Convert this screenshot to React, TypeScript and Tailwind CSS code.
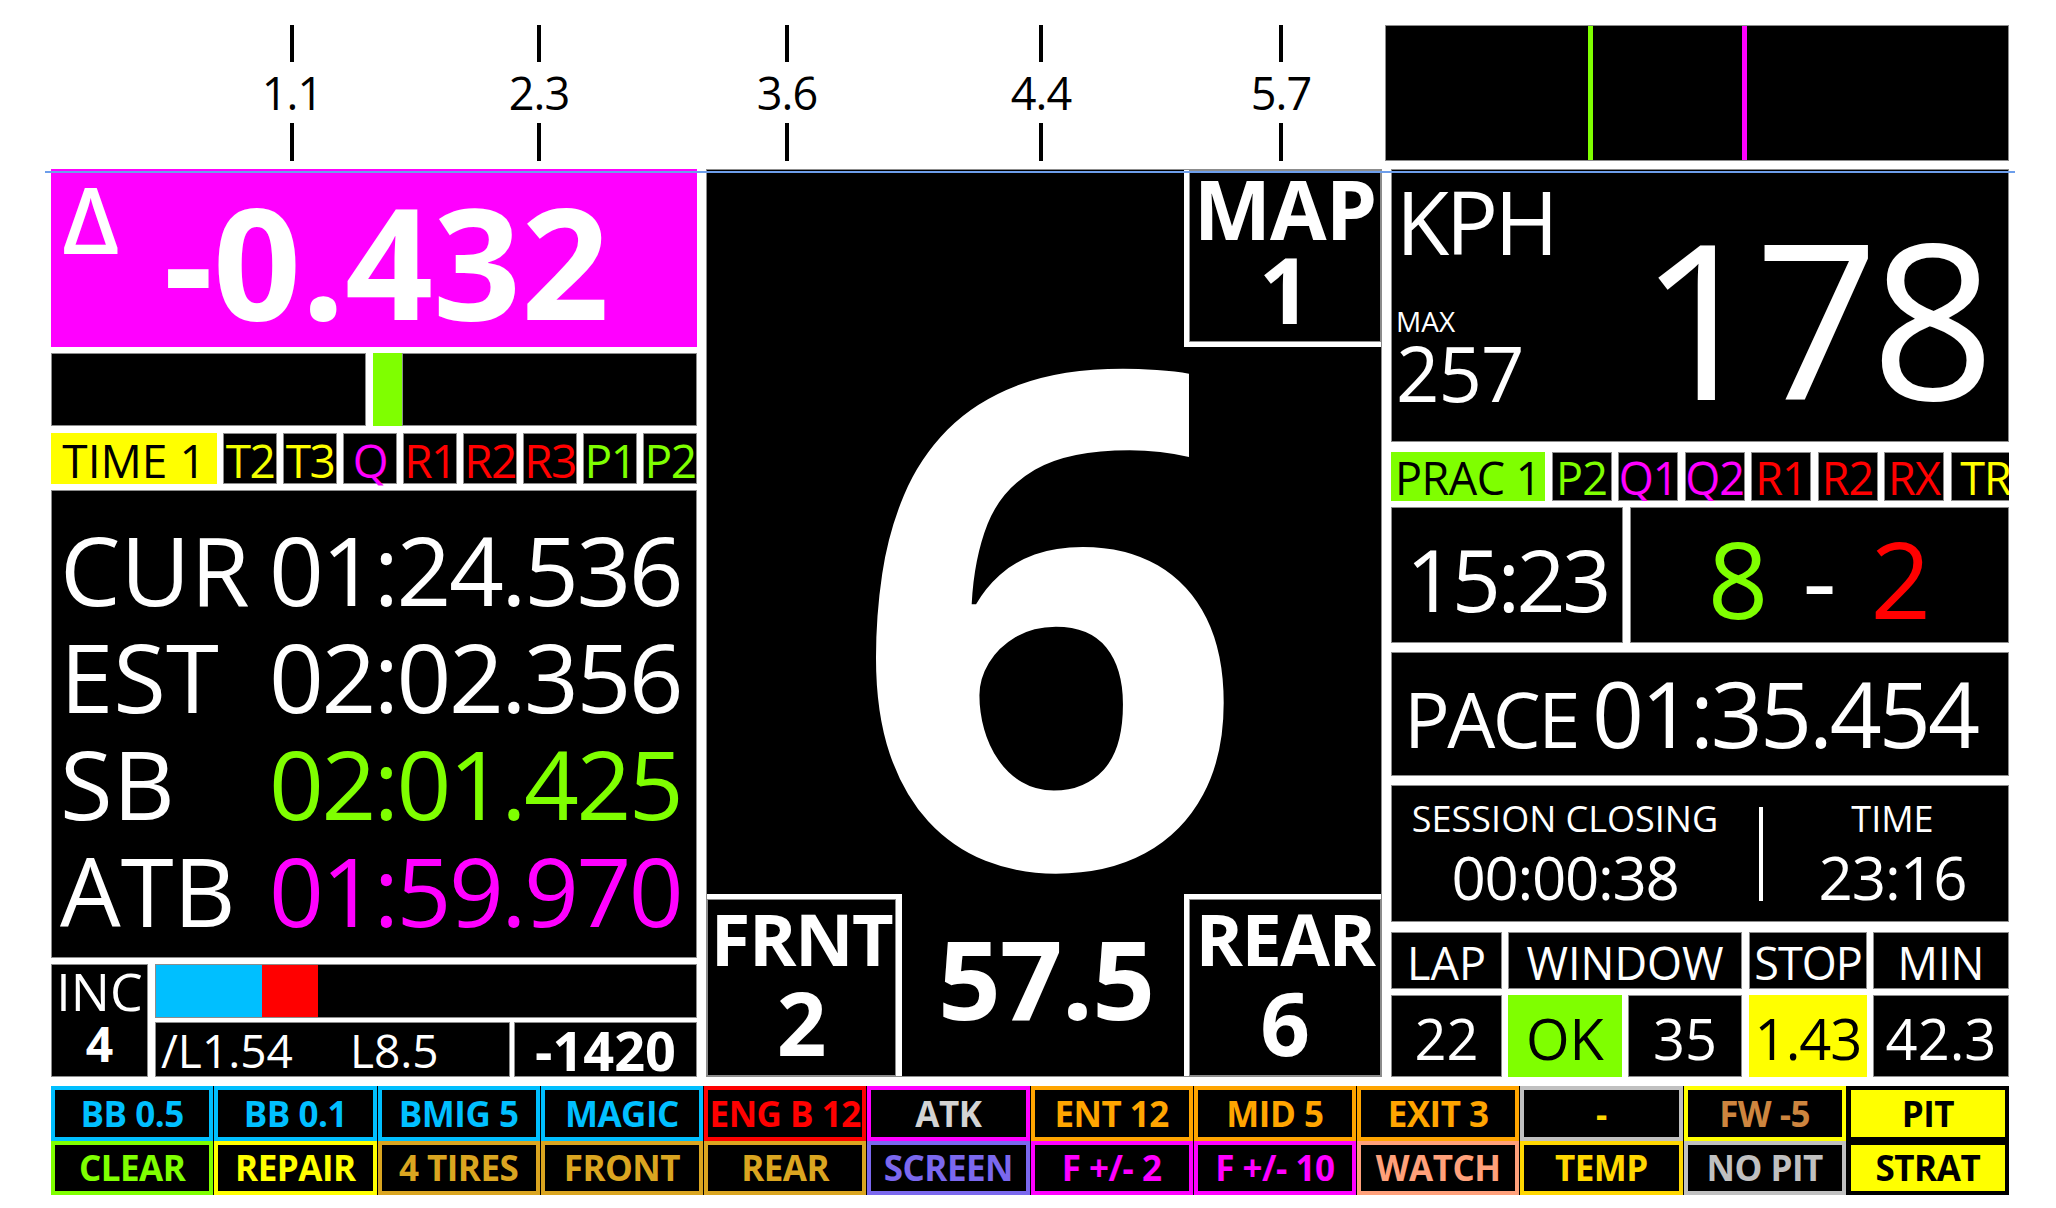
import React from "react";

const BD = "border border-[#8c8c8c]";

type Tab = { t: string; c: string };

const leftTabs: Tab[] = [
  { t: "T2", c: "text-[#f2ff00]" },
  { t: "T3", c: "text-[#ffff00]" },
  { t: "Q", c: "text-[#ff00ff]" },
  { t: "R1", c: "text-[#ff0000]" },
  { t: "R2", c: "text-[#ff0000]" },
  { t: "R3", c: "text-[#ff0000]" },
  { t: "P1", c: "text-[#7fff00]" },
  { t: "P2", c: "text-[#7fff00]" },
];

const rightTabs: Tab[] = [
  { t: "P2", c: "text-[#7fff00]" },
  { t: "Q1", c: "text-[#ff00ff]" },
  { t: "Q2", c: "text-[#ff00ff]" },
  { t: "R1", c: "text-[#ff0000]" },
  { t: "R2", c: "text-[#ff0000]" },
  { t: "RX", c: "text-[#ff0000]" },
];

type Btn = { t: string; frame: string; text: string; inner: string };

const buttons: Btn[] = [
  { t: "BB 0.5", frame: "bg-[#00bfff]", text: "text-[#00bfff]", inner: "bg-black" },
  { t: "BB 0.1", frame: "bg-[#00bfff]", text: "text-[#00bfff]", inner: "bg-black" },
  { t: "BMIG 5", frame: "bg-[#00bfff]", text: "text-[#00bfff]", inner: "bg-black" },
  { t: "MAGIC", frame: "bg-[#00bfff]", text: "text-[#00bfff]", inner: "bg-black" },
  { t: "ENG B 12", frame: "bg-[#ff0000]", text: "text-[#ff0000]", inner: "bg-black" },
  { t: "ATK", frame: "bg-[#ff00ff]", text: "text-[#d3d3d3]", inner: "bg-black" },
  { t: "ENT 12", frame: "bg-[#ffa500]", text: "text-[#ffa500]", inner: "bg-black" },
  { t: "MID 5", frame: "bg-[#ffa500]", text: "text-[#ffa500]", inner: "bg-black" },
  { t: "EXIT 3", frame: "bg-[#ffa500]", text: "text-[#ffa500]", inner: "bg-black" },
  { t: "-", frame: "bg-[#c0c0c0]", text: "text-[#ffd700]", inner: "bg-black" },
  { t: "FW -5", frame: "bg-[#ffff00]", text: "text-[#cd853f]", inner: "bg-black" },
  { t: "PIT", frame: "bg-black", text: "text-black", inner: "bg-[#ffff00]" },
  { t: "CLEAR", frame: "bg-[#7fff00]", text: "text-[#7fff00]", inner: "bg-black" },
  { t: "REPAIR", frame: "bg-[#ffff00]", text: "text-[#ffff00]", inner: "bg-black" },
  { t: "4 TIRES", frame: "bg-[#daa520]", text: "text-[#daa520]", inner: "bg-black" },
  { t: "FRONT", frame: "bg-[#daa520]", text: "text-[#daa520]", inner: "bg-black" },
  { t: "REAR", frame: "bg-[#daa520]", text: "text-[#daa520]", inner: "bg-black" },
  { t: "SCREEN", frame: "bg-[#7b68ee]", text: "text-[#7b68ee]", inner: "bg-black" },
  { t: "F +/- 2", frame: "bg-[#ff00ff]", text: "text-[#ff00ff]", inner: "bg-black" },
  { t: "F +/- 10", frame: "bg-[#ff00ff]", text: "text-[#ff00ff]", inner: "bg-black" },
  { t: "WATCH", frame: "bg-[#ffa07a]", text: "text-[#ffa07a]", inner: "bg-black" },
  { t: "TEMP", frame: "bg-[#ffd700]", text: "text-[#ffd700]", inner: "bg-black" },
  { t: "NO PIT", frame: "bg-[#c0c0c0]", text: "text-[#c0c0c0]", inner: "bg-black" },
  { t: "STRAT", frame: "bg-black", text: "text-black", inner: "bg-[#ffff00]" },
];

const ticks = [
  { x: 292, label: "1.1" },
  { x: 539, label: "2.3" },
  { x: 787, label: "3.6" },
  { x: 1041, label: "4.4" },
  { x: 1281, label: "5.7" },
];

const times = [
  { l: "CUR", v: "01:24.536", c: "text-white" },
  { l: "EST", v: "02:02.356", c: "text-white" },
  { l: "SB", v: "02:01.425", c: "text-[#7fff00]" },
  { l: "ATB", v: "01:59.970", c: "text-[#ff00ff]" },
];

function Ruler() {
  return (
    <div className="relative w-[1334px] h-[169px]">
      {ticks.map((t) => (
        <div
          key={t.label}
          className="absolute top-0 w-[120px] flex flex-col items-center"
          style={{ left: t.x - 51 - 60 }}
        >
          <div className="mt-[25px] h-[37px] w-[4px] bg-black" />
          <div className="h-[61px] text-[45px] leading-[61px] text-black tracking-[-1px]">{t.label}</div>
          <div className="h-[38px] w-[4px] bg-black" />
        </div>
      ))}
    </div>
  );
}

function LeftColumn() {
  return (
    <div className="w-[646px] flex flex-col">
      <div className="h-[178px] bg-[#ff00ff] flex items-start pl-[11px] pt-[3px]">
        <span className="text-[93px] leading-none font-semibold text-white">Δ</span>
        <span className="self-center ml-[44px] text-[154px] leading-none font-bold text-white">-0.432</span>
      </div>
      <div className="mt-[6px] h-[73px] flex">
        <div className={`w-[315px] bg-black ${BD}`} />
        <div className="w-[7px]" />
        <div className="w-[29px] bg-[#7fff00]" />
        <div className={`flex-1 bg-black ${BD}`} />
      </div>
      <div className="mt-[7px] h-[51px] flex gap-[6px] text-[46px] leading-none">
        <div className="w-[166px] bg-[#ffff00] text-black flex items-center justify-center pt-[3px] whitespace-nowrap">
          TIME 1
        </div>
        {leftTabs.map((t) => (
          <div
            key={t.t}
            className={`w-[54px] bg-black ${BD} ${t.c} flex items-center justify-center pt-[3px] tracking-[-1.5px] whitespace-nowrap`}
          >
            {t.t}
          </div>
        ))}
      </div>
      <div className={`mt-[6px] h-[468px] bg-black ${BD} flex flex-col justify-center pt-[10px]`}>
        {times.map((r) => (
          <div key={r.l} className="h-[107px] flex items-center text-[96px] leading-none whitespace-nowrap">
            <div className="w-[217px] pl-[8px] text-white">{r.l}</div>
            <div className={`${r.c} tracking-[-2.5px]`}>{r.v}</div>
          </div>
        ))}
      </div>
      <div className="mt-[6px] h-[113px] flex gap-[7px]">
        <div className={`w-[97px] bg-black ${BD} flex flex-col items-center text-white`}>
          <div className="text-[52px] leading-[52px]">INC</div>
          <div className="mt-[3px] text-[48px] leading-[48px] font-bold">4</div>
        </div>
        <div className="flex-1 flex flex-col gap-[4px]">
          <div className={`h-[54px] bg-black ${BD} flex`}>
            <div className="w-[106px] bg-[#00bfff]" />
            <div className="w-[56px] bg-[#ff0000]" />
          </div>
          <div className="h-[55px] flex gap-[4px]">
            <div className={`w-[355px] bg-black ${BD} flex items-center pl-[5px] text-white text-[46px] leading-none whitespace-nowrap`}>
              <span>/L1.54</span>
              <span className="ml-[57px]">L8.5</span>
            </div>
            <div className={`flex-1 bg-black ${BD} flex items-center justify-center text-white text-[54px] leading-none font-bold`}>
              -1420
            </div>
          </div>
        </div>
      </div>
    </div>
  );
}

function CenterColumn() {
  return (
    <div className={`w-[676px] bg-black ${BD} flex flex-col text-white font-bold`}>
      <div className="h-[177px] flex justify-end">
        <div className="w-[197px] bg-white pl-[5px] pb-[5px] flex">
          <div className={`flex-1 bg-black ${BD} flex flex-col items-center`}>
            <div className="mt-[4px] text-[82px] leading-[66px] tracking-[-1px]">MAP</div>
            <div className="text-[92px] leading-[95px]">1</div>
          </div>
        </div>
      </div>
      <div className="flex-1 flex items-center justify-center">
        <div className="text-[690px] leading-[500px] mb-[44px] ml-[10px]">6</div>
      </div>
      <div className="h-[182px] flex">
        <div className="w-[195px] bg-white pt-[5px] pr-[6px] flex">
          <div className={`flex-1 bg-black ${BD} flex flex-col items-center`}>
            <div className="mt-[8px] text-[72px] leading-[60px] tracking-[-1.5px]">FRNT</div>
            <div className="mt-[14px] text-[87px] leading-[80px]">2</div>
          </div>
        </div>
        <div className="flex-1 flex items-center justify-center">
          <div className="mb-[16px] ml-[6px] text-[110px] leading-none tracking-[-1px]">57.5</div>
        </div>
        <div className="w-[197px] bg-white pt-[5px] pl-[5px] flex">
          <div className={`flex-1 bg-black ${BD} flex flex-col items-center`}>
            <div className="mt-[8px] text-[72px] leading-[60px] tracking-[-1.5px]">REAR</div>
            <div className="mt-[14px] text-[87px] leading-[80px]">6</div>
          </div>
        </div>
      </div>
    </div>
  );
}

function RightColumn() {
  return (
    <div className="w-[618px] flex flex-col text-white">
      <div className={`h-[273px] bg-black ${BD} flex`}>
        <div className="flex flex-col pl-[4px] pt-[8px]">
          <div className="text-[87px] leading-none tracking-[-3.5px]">KPH</div>
          <div className="mt-[42px] text-[28px] leading-none">MAX</div>
          <div className="text-[76px] leading-none tracking-[-1px]">257</div>
        </div>
        <div className="flex-1 flex justify-end pr-[21px] pt-[38px]">
          <div className="text-[217px] leading-none tracking-[-8px]">178</div>
        </div>
      </div>
      <div className="mt-[10px] h-[49px] flex gap-[6.5px] overflow-hidden text-[45px] leading-none whitespace-nowrap">
        <div className="w-[154px] shrink-0 bg-[#7fff00] text-black flex items-center justify-center pt-[2px] tracking-[-0.5px]">
          PRAC 1
        </div>
        {rightTabs.map((t) => (
          <div
            key={t.t}
            className={`w-[60px] shrink-0 bg-black ${BD} ${t.c} flex items-center justify-center pt-[2px] tracking-[-1px]`}
          >
            {t.t}
          </div>
        ))}
        <div className={`w-[70px] shrink-0 bg-black ${BD} text-[#ffff00] flex items-center justify-center pt-[2px] tracking-[-1px]`}>
          TR
        </div>
      </div>
      <div className="mt-[6px] h-[136px] flex gap-[7px]">
        <div className={`w-[232px] bg-black ${BD} flex items-center justify-center pt-[8px] text-[86px] leading-none tracking-[-3.5px]`}>
          15:23
        </div>
        <div className={`flex-1 bg-black ${BD} flex items-center justify-center gap-[34px] pt-[6px] text-[106px] leading-none`}>
          <span className="text-[#7fff00]">8</span>
          <span className="text-white">-</span>
          <span className="text-[#ff0000]">2</span>
        </div>
      </div>
      <div className={`mt-[9px] h-[124px] bg-black ${BD} flex items-baseline pl-[12px] pt-[22px] whitespace-nowrap`}>
        <span className="text-[76px] leading-[76px] tracking-[-2.5px]">PACE</span>
        <span className="ml-[14px] text-[91px] leading-[76px] tracking-[-3px]">01:35.454</span>
      </div>
      <div className={`mt-[9px] h-[137px] bg-black ${BD} flex items-center`}>
        <div className="w-[346px] flex flex-col items-center">
          <div className="text-[36px] leading-none whitespace-nowrap">SESSION CLOSING</div>
          <div className="mt-[10px] text-[60px] leading-none tracking-[-1.3px]">00:00:38</div>
        </div>
        <div className="ml-[21px] w-[4px] h-[94px] bg-white" />
        <div className="flex-1 pl-[14px] flex flex-col items-center">
          <div className="text-[36px] leading-none">TIME</div>
          <div className="mt-[10px] text-[60px] leading-none tracking-[-1px]">23:16</div>
        </div>
      </div>
      <div className="mt-[10px] h-[57px] flex text-[45px] leading-none">
        <div className={`w-[111px] bg-black ${BD} flex items-center justify-center pt-[3px]`}>LAP</div>
        <div className={`ml-[6px] w-[234px] bg-black ${BD} flex items-center justify-center pt-[3px]`}>WINDOW</div>
        <div className={`ml-[7px] w-[118px] bg-black ${BD} flex items-center justify-center pt-[3px] tracking-[-1px]`}>STOP</div>
        <div className={`ml-[6px] w-[136px] bg-black ${BD} flex items-center justify-center pt-[3px]`}>MIN</div>
      </div>
      <div className="mt-[6px] h-[82px] flex text-[56px] leading-none">
        <div className={`w-[111px] bg-black ${BD} flex items-center justify-center pt-[4px]`}>22</div>
        <div className="ml-[6px] w-[114px] bg-[#7fff00] text-black flex items-center justify-center pt-[4px]">OK</div>
        <div className={`ml-[6px] w-[114px] bg-black ${BD} flex items-center justify-center pt-[4px]`}>35</div>
        <div className="ml-[7px] w-[118px] bg-[#ffff00] text-black flex items-center justify-center pt-[4px] tracking-[-1px]">1.43</div>
        <div className={`ml-[6px] w-[136px] bg-black ${BD} flex items-center justify-center pt-[4px]`}>42.3</div>
      </div>
    </div>
  );
}

function Buttons() {
  return (
    <div className="ml-[51px] mt-[9px] w-[1958px] h-[109px] grid grid-cols-12 grid-rows-2 gap-x-[1px] bg-black">
      {buttons.map((b, i) => (
        <div key={i} className={`${b.frame} p-[4px] flex`}>
          <div
            className={`flex-1 ${b.inner} ${b.text} flex items-center justify-center text-[35px] leading-none font-bold whitespace-nowrap tracking-[-0.5px]`}
          >
            {b.t}
          </div>
        </div>
      ))}
    </div>
  );
}

export default function App() {
  return (
    <div className="relative w-[2056px] h-[1208px] bg-white overflow-hidden font-['Open_Sans',sans-serif]">
      <div className="flex h-[169px] pl-[51px]">
        <Ruler />
        <div className={`relative mt-[25px] w-[624px] h-[136px] bg-black ${BD}`}>
          <div className="absolute top-0 bottom-0 left-[202px] w-[5px] bg-[#7fff00]" />
          <div className="absolute top-0 bottom-0 left-[356px] w-[5px] bg-[#ff00ff]" />
        </div>
      </div>
      <div className="flex h-[908px] pl-[51px] gap-[9px]">
        <LeftColumn />
        <CenterColumn />
        <RightColumn />
      </div>
      <Buttons />
      <div className="absolute left-[45px] top-[171px] w-[1970px] h-[2px] bg-[#6d9eeb]" />
    </div>
  );
}
